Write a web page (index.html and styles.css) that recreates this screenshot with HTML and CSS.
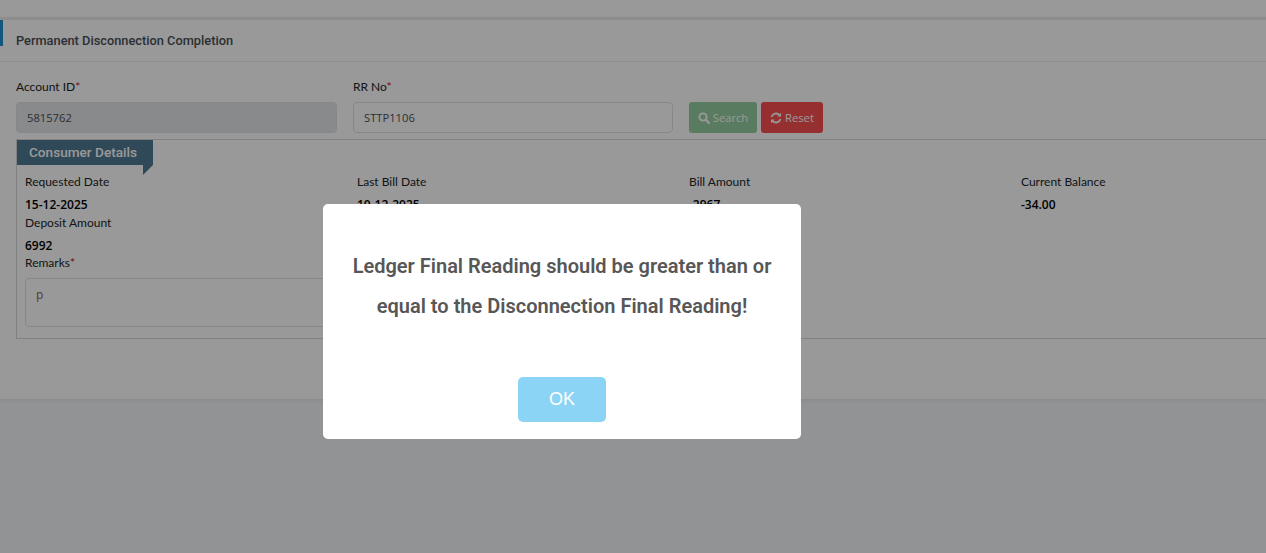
FILE: index.html
```html
<!DOCTYPE html>
<html lang="en">
<head>
  <meta charset="UTF-8">
  <meta name="viewport" content="width=device-width, initial-scale=1.0">
  <title>Permanent Disconnection Completion</title>
  <link rel="stylesheet" href="styles.css">
</head>
<body>

  <div class="topbar"></div>

  <div class="card">
    <div class="card-title">Permanent Disconnection Completion</div>

    <form class="search-row">
      <div class="field">
        <label>Account ID<span class="req">*</span></label>
        <input class="input input-disabled" type="text" value="5815762" readonly>
      </div>
      <div class="field">
        <label>RR No<span class="req">*</span></label>
        <input class="input" type="text" value="STTP1106">
      </div>
      <div class="search-buttons">
        <button type="button" class="btn btn-search">
          <svg class="icon" viewBox="0 0 12 12"><circle cx="5" cy="5" r="3.6" fill="none" stroke="currentColor" stroke-width="1.8"/><path d="M7.8 7.8 11 11" stroke="currentColor" stroke-width="2.2" stroke-linecap="round"/></svg>
          Search
        </button>
        <button type="button" class="btn btn-reset">
          <svg class="icon" viewBox="0 0 12 12"><path d="M1.6 5A4.5 4.5 0 0 1 9.4 3.1" fill="none" stroke="currentColor" stroke-width="1.8"/><path d="M11 .8V4.6H7.2Z" fill="currentColor"/><path d="M10.4 7A4.5 4.5 0 0 1 2.6 8.9" fill="none" stroke="currentColor" stroke-width="1.8"/><path d="M1 11.2V7.4H4.8Z" fill="currentColor"/></svg>
          Reset
        </button>
      </div>
    </form>

    <div class="details">
      <div class="ribbon">Consumer Details</div>
      <div class="details-grid">
        <div class="detail"><span>Requested Date</span><b>15-12-2025</b></div>
        <div class="detail"><span>Last Bill Date</span><b>10-12-2025</b></div>
        <div class="detail"><span>Bill Amount</span><b>-2967</b></div>
        <div class="detail"><span>Current Balance</span><b>-34.00</b></div>
        <div class="detail"><span>Deposit Amount</span><b>6992</b></div>
      </div>
      <div class="remarks">
        <label>Remarks<span class="req">*</span></label>
        <textarea class="textarea">p</textarea>
      </div>
    </div>
  </div>

  <div class="overlay">
    <div class="modal">
      <p class="modal-text">Ledger Final Reading should be greater than or equal to the Disconnection Final Reading!</p>
      <button type="button" class="modal-ok">OK</button>
    </div>
  </div>

</body>
</html>
```

FILE: styles.css
```css
* {
  box-sizing: border-box;
}

body {
  font-family: Lato, sans-serif;
  font-size: 12px;
  background-color: #f3f5f8;
  color: #212529;
  margin: 0;
  padding: 0;
  height: 553px;
  overflow: hidden;
}

.topbar {
  height: 17px;
  background-color: #fff;
}

.card {
  background-color: #fff;
  border-top: 3px solid #ececec;
  height: 382px;
  box-shadow: 0 2px 4px rgba(0, 0, 0, 0.06);
}

.card-title {
  height: 42px;
  padding-left: 16px;
  line-height: 41px;
  font-family: Roboto, sans-serif;
  font-size: 12.8px;
  font-weight: 500;
  color: #495057;
  border-bottom: 1px solid #ebebeb;
  position: relative;
}

.card-title::before {
  content: "";
  position: absolute;
  left: 0;
  top: 0;
  width: 3px;
  height: 26px;
  background-color: #1f8fd0;
}

.search-row {
  display: grid;
  grid-template-columns: 321px 320px auto;
  column-gap: 16px;
  padding: 16px 16px 0;
}

.field label,
.remarks label {
  display: block;
  line-height: 18px;
}

.field label {
  margin-bottom: 6px;
}

.req {
  color: #c8102e;
}

.input {
  display: block;
  width: 100%;
  height: 31px;
  padding: 0 10px;
  font-family: 'Open Sans', sans-serif;
  font-size: 11.2px;
  color: #495057;
  background-color: #fff;
  border: 1px solid #dee2e6;
  border-radius: 4px;
}

.input-disabled {
  background-color: #e4e6e9;
}

.search-buttons {
  display: flex;
  gap: 4px;
  padding-top: 24px;
}

.btn {
  display: flex;
  align-items: center;
  justify-content: center;
  gap: 3px;
  height: 31px;
  padding: 0;
  border: 1px solid transparent;
  border-radius: 3px;
  font-family: 'Open Sans', sans-serif;
  font-size: 11.2px;
  color: #fff;
}

.icon {
  width: 12px;
  height: 12px;
}

.btn-search {
  width: 68px;
  background-color: #94cfa0;
}

.btn-reset {
  width: 62px;
  background-color: #fa4f4f;
}

.details {
  margin: 6px 0 0 16px;
  height: 200px;
  border-top: 1px solid #d8d8d8;
  border-bottom: 1px solid #d8d8d8;
  border-left: 1px solid #d8d8d8;
  padding-left: 8px;
  position: relative;
}

.ribbon {
  position: absolute;
  left: 0;
  top: 0;
  width: 136px;
  height: 25px;
  padding-left: 12px;
  line-height: 24px;
  font-family: Roboto, sans-serif;
  font-size: 13.6px;
  font-weight: 500;
  color: #fff;
  background-color: #517a93;
}

.ribbon::after {
  content: "";
  position: absolute;
  right: 0;
  top: 25px;
  border-style: solid;
  border-width: 10px 10px 0 0;
  border-color: #517a93 transparent transparent transparent;
}

.details-grid {
  display: grid;
  grid-template-columns: repeat(3, 332px) 1fr;
  padding-top: 33px;
}

.detail span,
.detail b {
  display: block;
}

.detail span {
  line-height: 18px;
}

.detail b {
  margin-top: 5px;
  line-height: 18px;
  font-family: 'Open Sans', sans-serif;
  font-size: 12px;
  color: #000;
  font-weight: 600;
}

.remarks label {
  margin-top: -1px;
}

.textarea {
  display: block;
  width: 320px;
  height: 49px;
  margin-top: 6px;
  padding: 7px 10px;
  font-family: 'Open Sans', sans-serif;
  font-size: 12px;
  color: #7a6a5e;
  border: 1px solid #dee2e6;
  border-radius: 4px;
  resize: none;
}

.overlay {
  position: fixed;
  inset: 0;
  background-color: rgba(0, 0, 0, 0.4);
}

.modal {
  position: absolute;
  left: 323px;
  top: 204px;
  width: 478px;
  height: 235px;
  padding: 42px 17px 0;
  text-align: center;
  background-color: #fff;
  border-radius: 5px;
}

.modal-text {
  margin: 0;
  font-family: Roboto, sans-serif;
  font-size: 20px;
  font-weight: 600;
  line-height: 40px;
  color: #575757;
}

.modal-ok {
  display: block;
  width: 88px;
  height: 45px;
  margin: 51px auto 0;
  font-family: 'Liberation Sans', sans-serif;
  font-size: 18px;
  color: #fff;
  background-color: #8cd4f5;
  border: 0;
  border-radius: 5px;
}
```
